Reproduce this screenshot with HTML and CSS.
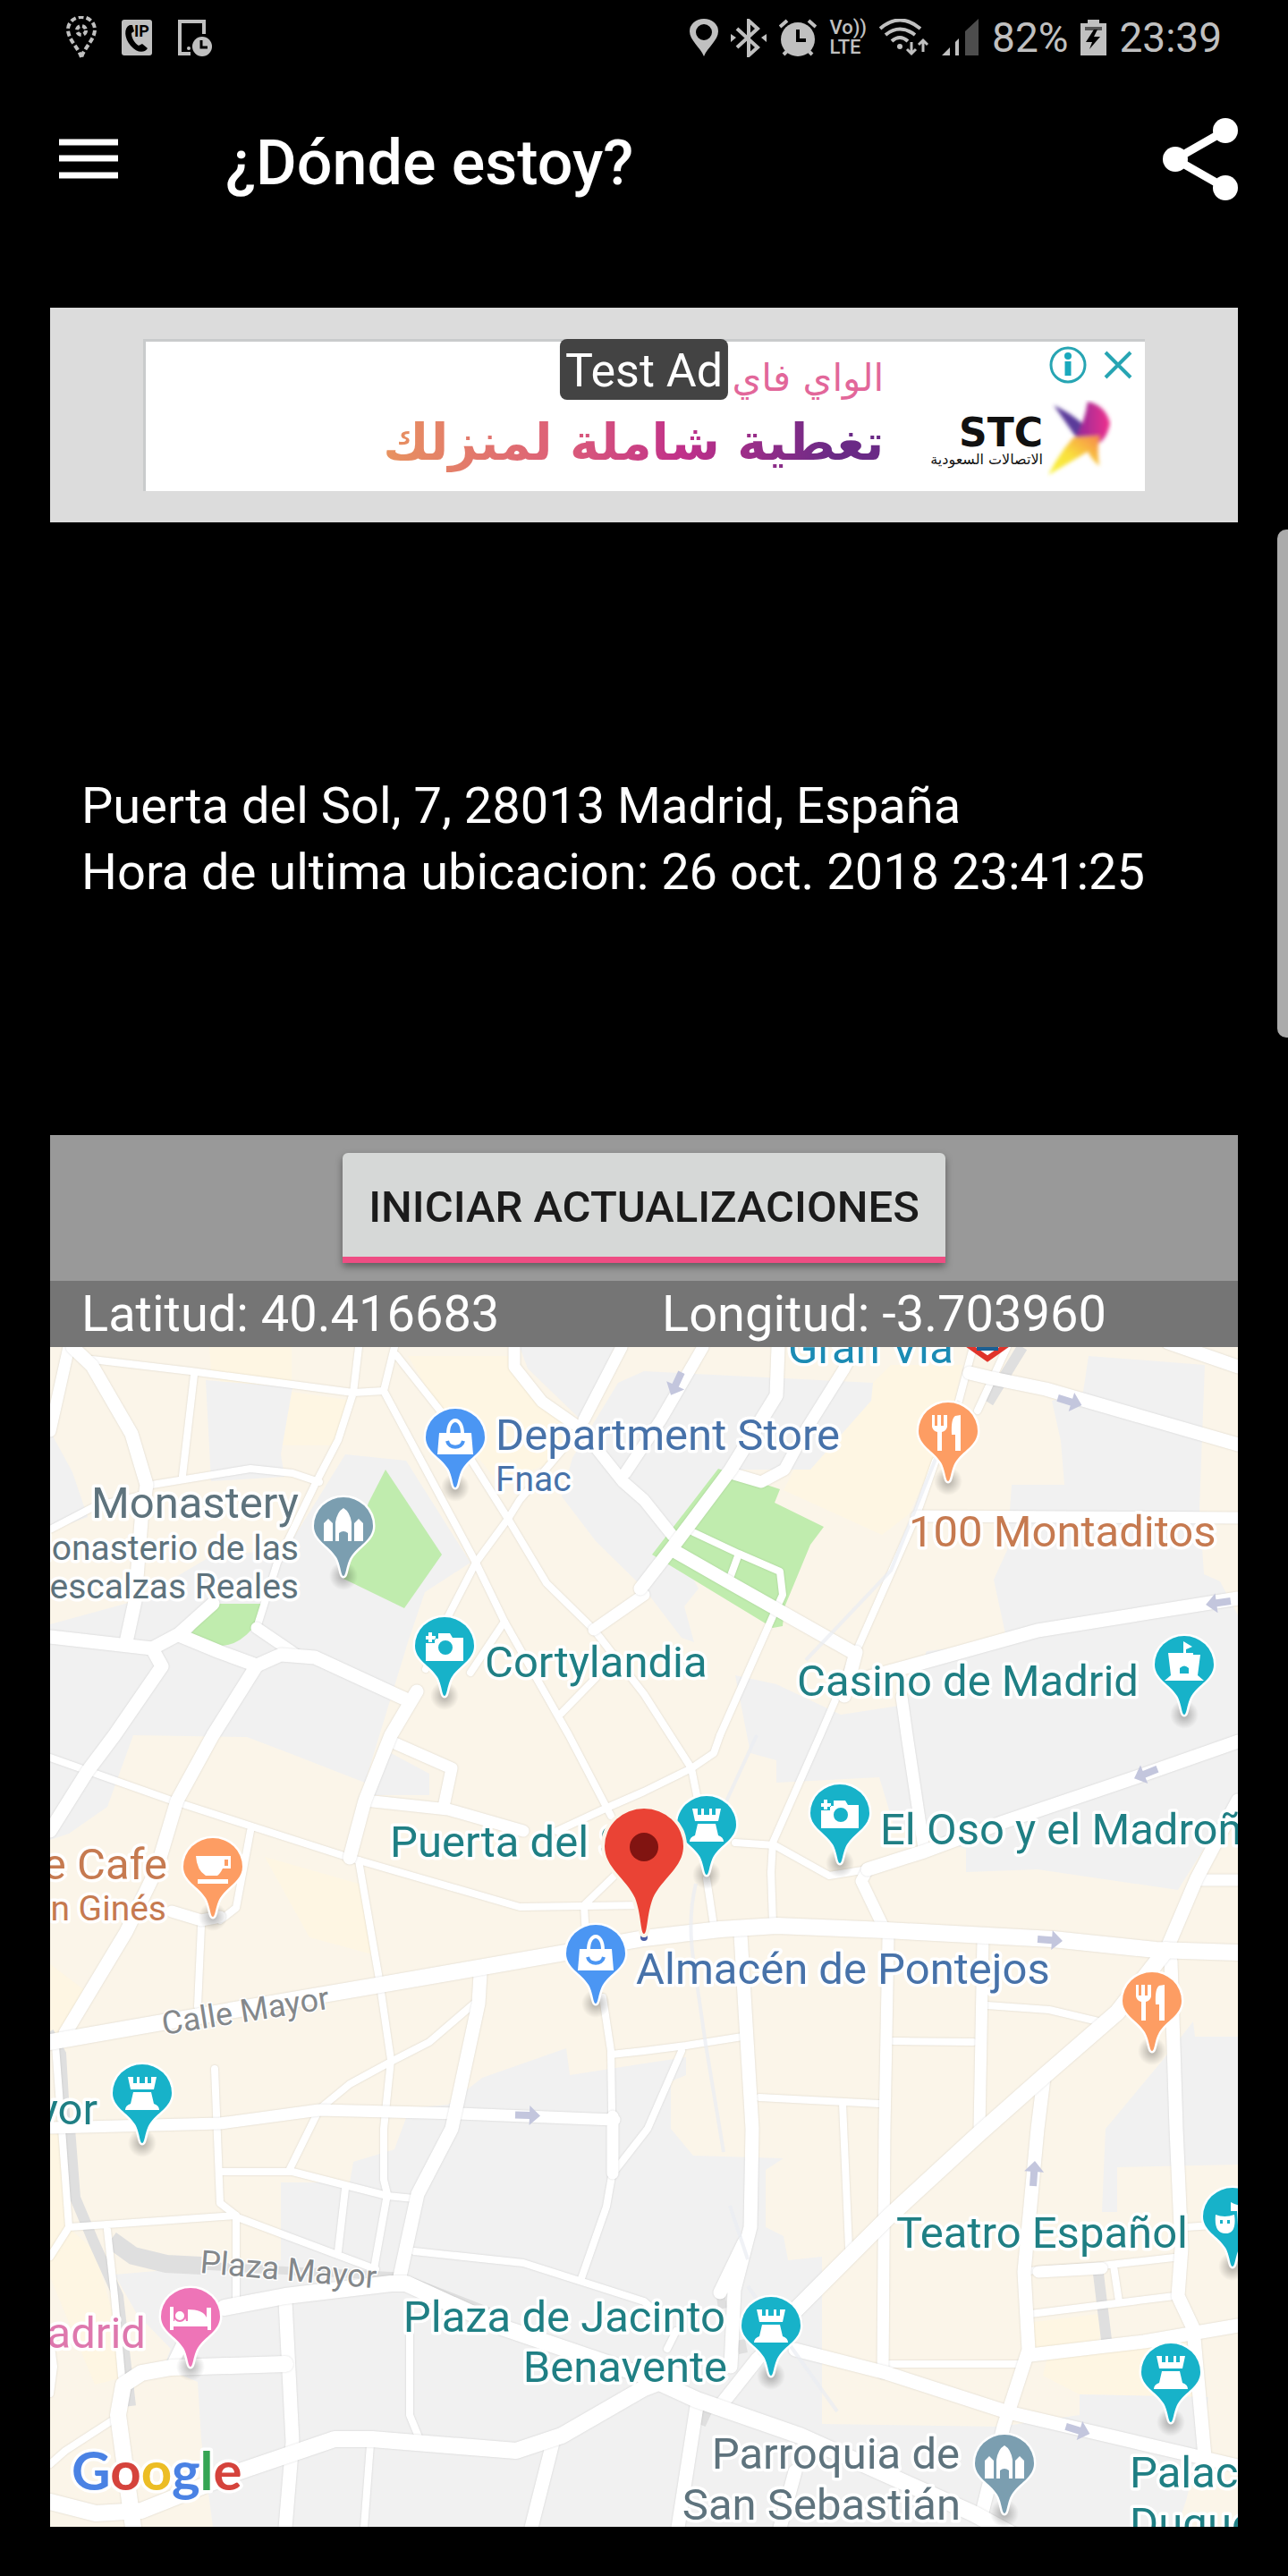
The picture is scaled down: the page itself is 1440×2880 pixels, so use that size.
FILE: index.html
```html
<!DOCTYPE html>
<html lang="es">
<head>
    <meta charset="UTF-8">
    <title>¿Dónde estoy?</title>
    <meta name="viewport" content="width=device-width, initial-scale=1.0">
    <link rel="stylesheet" href="styles.css">
</head>
<body>

<div class="statusbar">
    <div class="status-left">
        <svg width="34" height="48" viewBox="0 0 34 48" fill="none" stroke="#c0c0c0" stroke-width="4" stroke-dasharray="6 3">
            <path d="M17 46C14 36 2 26 2 15A15 14 0 0 1 32 15C32 26 20 36 17 46Z"/>
            <circle cx="17" cy="16" r="5" stroke-dasharray="5 3"/>
        </svg>
        <svg width="34" height="40" viewBox="0 0 34 40">
            <rect width="34" height="40" rx="3" fill="#c0c0c0"/>
            <path d="M9 6C2 9 3 21 10 29C17 37 25 38 29 32L23 27L19 29C14 26 11 20 11 15L14 13L12 6Z" fill="#000"/>
            <text x="14" y="19" class="ip">IP</text>
        </svg>
        <svg width="40" height="41" viewBox="0 0 40 41">
            <path d="M15 38H3V2H30V16" fill="none" stroke="#c0c0c0" stroke-width="4"/>
            <circle cx="13" cy="32" r="2" fill="#c0c0c0"/>
            <circle cx="28" cy="30" r="11" fill="#c0c0c0"/>
            <path d="M27 23V31H34" fill="none" stroke="#000" stroke-width="3"/>
        </svg>
    </div>
    <div class="status-right">
        <svg width="32" height="42" viewBox="0 0 32 42"><path fill="#c0c0c0" fill-rule="evenodd" d="M16 42C12 32 0 24 0 14A16 14 0 0 1 32 14C32 24 20 32 16 42ZM16 6A9 9 0 1 0 16 24A9 9 0 1 0 16 6Z"/></svg>
        <svg width="40" height="43" viewBox="0 0 40 43"><path d="M7 11L30 32L20 41V2L30 11L7 32" fill="none" stroke="#c0c0c0" stroke-width="4"/><path d="M0 17V26L6 21ZM40 17V26L34 21Z" fill="#c0c0c0"/></svg>
        <svg width="42" height="42" viewBox="0 0 42 42"><path d="M1 9L9 2M33 2L41 9M5 40L9 36M33 36L37 40" stroke="#c0c0c0" stroke-width="4"/><ellipse cx="21" cy="23" rx="19" ry="19" fill="#c0c0c0"/><path d="M21 12V24H30" fill="none" stroke="#000" stroke-width="4"/></svg>
        <div class="volte"><span>Vo))</span><span>LTE</span></div>
        <svg width="56" height="42" viewBox="0 0 56 42"><path d="M1 11Q23 -8 46 11M7 18Q23 5 40 18M14 25Q23 17 32 25" fill="none" stroke="#c0c0c0" stroke-width="4"/><circle cx="23" cy="31" r="3" fill="#c0c0c0"/><path d="M36 26V39M31 34L36 39L41 34M49 37V24M44 29L49 24L54 29" fill="none" stroke="#c0c0c0" stroke-width="3"/></svg>
        <svg width="42" height="42" viewBox="0 0 42 42"><path d="M0 41L9 32V41ZM15 26L19 22V41H15Z" fill="#c0c0c0"/><path d="M26 14L41 0V41H26Z" fill="#4d4d4d"/></svg>
        <span class="status-text">82%</span>
        <svg width="29" height="42" viewBox="0 0 29 42"><path d="M8 1H21V5H29V41H0V5H8Z" fill="#c0c0c0"/><path d="M5 9H24V13H5Z" fill="#555"/><path d="M15 12L6 26H13L10 34L22 20H15L19 12Z" fill="#000"/></svg>
        <span class="status-text">23:39</span>
    </div>
</div>

<header class="appbar">
    <button class="icon-btn" type="button" aria-label="Menú">
        <svg width="66" height="48" viewBox="0 0 66 48"><path d="M0 5H66M0 23H66M0 42H66" stroke="#fff" stroke-width="7"/></svg>
    </button>
    <h1>¿Dónde estoy?</h1>
    <button class="icon-btn" type="button" aria-label="Compartir">
        <svg width="84" height="92" viewBox="0 0 84 92"><path d="M70 14L14 46L70 78" fill="none" stroke="#fff" stroke-width="9"/><g fill="#fff"><circle cx="70" cy="14" r="14"/><circle cx="14" cy="46" r="14"/><circle cx="70" cy="78" r="14"/></g></svg>
    </button>
</header>

<main>
    <section class="ad">
        <div class="ad-box">
            <span class="test-ad">Test Ad</span>
            <div class="ad-text" lang="ar" dir="rtl">
                <span class="ad-line1">الواي فاي</span>
                <span class="ad-line2">تغطية شاملة لمنزلك</span>
            </div>
            <div class="ad-side">
                <div class="ad-choices">
                    <button class="icon-btn" type="button" aria-label="Información">
                        <svg width="42" height="42" viewBox="0 0 42 42"><circle cx="21" cy="21" r="19" fill="none" stroke="#27a5b3" stroke-width="3"/><circle cx="21" cy="11" r="4" fill="#1aa9bd"/><path d="M21 17V33" stroke="#1aa9bd" stroke-width="7"/></svg>
                    </button>
                    <button class="icon-btn" type="button" aria-label="Cerrar">
                        <svg width="32" height="32" viewBox="0 0 32 32"><path d="M2 2L30 30M30 2L2 30" stroke="#27a5b3" stroke-width="4"/></svg>
                    </button>
                </div>
                <div class="brand">
                    <div class="brand-name">
                        <b>STC</b>
                        <span lang="ar" dir="rtl">الاتصالات السعودية</span>
                    </div>
                    <svg width="74" height="88" viewBox="0 0 74 88">
                        <defs>
                            <linearGradient id="wing" x1="0" y1="0" x2="1" y2="0"><stop offset="0" stop-color="#8a2a9a"/><stop offset="1" stop-color="#f0308c"/></linearGradient>
                            <linearGradient id="tail" x1="0" y1="1" x2="1" y2="0"><stop offset="0" stop-color="#f8f43c"/><stop offset=".45" stop-color="#f9e03c"/><stop offset="1" stop-color="#f7864a"/></linearGradient>
                            <filter id="soft"><feGaussianBlur stdDeviation="2"/></filter>
                        </defs>
                        <g filter="url(#soft)">
                            <path d="M8 6Q26 14 42 28L36 46Q22 26 8 6Z" fill="#5a3a9a"/>
                            <path d="M46 2Q66 6 71 26Q68 44 56 50L30 46Q42 28 46 2Z" fill="url(#wing)"/>
                            <path d="M2 84Q14 60 30 42L60 40Q56 52 59 74Q50 66 46 58Q26 70 2 84Z" fill="url(#tail)"/>
                        </g>
                    </svg>
                </div>
            </div>
        </div>
    </section>

    <section class="address">
        <p>Puerta del Sol, 7, 28013 Madrid, España</p>
        <p>Hora de ultima ubicacion: 26 oct. 2018 23:41:25</p>
    </section>

    <section class="actions">
        <button class="start-btn" type="button">INICIAR ACTUALIZACIONES</button>
    </section>

    <section class="coords">
        <span>Latitud: 40.416683</span>
        <span>Longitud: -3.703960</span>
    </section>

    <svg class="map" viewBox="0 0 1328 1319" role="img" aria-label="Mapa de Madrid">
        <defs>
            <path id="pin" d="M0 0C-3 0 -3 -13 -8 -21C-16 -34 -33 -40 -33 -56A33 32 0 0 1 33 -56C33 -40 16 -34 8 -21C3 -13 3 0 0 0Z"/>
            <path id="rook" d="M-16 -74H-10V-67H-6V-74H-3V-67H3V-74H6V-67H10V-74H16L13 -60H-13ZM-10 -57H10L13 -44Q19 -42 19 -37H-19Q-19 -42 -13 -44Z"/>
            <g id="bag"><path d="M-18 -61H18L20 -37H-20Z"/><path d="M-8 -60C-8 -80 8 -80 8 -60" fill="none" stroke="#fff" stroke-width="4"/><path d="M-9 -52C-7 -43 7 -43 9 -52" fill="none" stroke="#4b96f3" stroke-width="4"/></g>
            <path id="church" d="M-22 -39V-59L-17 -64L-12 -59V-39ZM12 -39V-59L17 -64L22 -59V-39ZM-9 -39V-60Q-7 -72 0 -76Q7 -72 9 -60V-39H5V-48Q0 -52 -5 -48V-39Z"/>
            <path id="camera" fill-rule="evenodd" d="M-21 -59H-11V-64H-7V-70H6L9 -65H21V-39H-21ZM1 -62A8 8 0 1 0 1 -46A8 8 0 1 0 1 -62ZM-18 -71H-14V-67H-10V-63H-14V-60H-18V-63H-21V-67H-18Z"/>
            <path id="fork" d="M-18 -74H-15V-62H-12V-74H-8V-62H-5V-74H-1V-61Q-2 -56 -7 -55V-34H-12V-55Q-17 -56 -18 -61ZM14 -74V-34H8V-52H4Q3 -70 8 -73Z"/>
            <path id="castle" fill-rule="evenodd" d="M-1 -69V-82L9 -76L2 -73V-69H10V-67H18L15 -44L22 -38H-22L-15 -44L-18 -69ZM-5 -46H5V-52Q0 -57 -5 -52Z"/>
            <path id="cup" fill-rule="evenodd" d="M-19 -68H20V-54H11Q8 -48 5 -46H-8Q-18 -52 -19 -68ZM13 -64V-57H17V-64ZM-17 -42H17V-37H-17Z"/>
            <path id="bed" d="M-23 -67H-19V-51H-18V-55Q-18 -63 -12 -63Q-6 -63 -6 -55L-5 -51H-3V-64Q14 -64 18 -55V-66H23V-41H19V-45H-19V-41H-23Z"/>
            <path id="mask" fill-rule="evenodd" d="M-19 -58Q-9 -54 2 -58Q5 -37 -8 -37Q-21 -37 -19 -58ZM-2 -72Q8 -66 18 -70V-50Q14 -44 6 -46L5 -62H-2ZM-14 -52V-48H-11V-52ZM-6 -52V-48H-3V-52Z"/>
            <path id="arrow" d="M-14 -4H2V-11L14 0L2 11V4H-14Z"/>
            <radialGradient id="shade"><stop offset="0" stop-color="#000" stop-opacity=".3"/><stop offset="1" stop-color="#000" stop-opacity="0"/></radialGradient>
        </defs>

        <rect width="1328" height="1319" fill="#fbf5e9"/>

        <!-- blocks -->
        <g fill="#fef6e3">
            <path d="M178 0H270V50L339 60L322 110H258L180 27ZM400 10H520L550 61L593 91L560 130L500 150L436 71Z"/>
            <path d="M940 20H1020L1005 90L960 187L930 210L820 160L846 110L900 60ZM240 570L345 600L364 680L290 660ZM1100 1090L1180 1080L1170 1120L1100 1125ZM1115 1130L1270 1110L1290 1174L1151 1171L1110 1150Z"/>
            <path d="M0 690L40 720L17 767L0 775ZM0 880H20V984L50 1010L90 1150L50 1160L0 1040Z"/>
        </g>
        <g fill="#f1f1f1">
            <path d="M0 94L25 140L42 190L0 205Z"/>
            <path d="M174 37L271 45L258 120L262 145L180 150Z"/>
            <path d="M178 235L265 225L330 120L398 127L470 241L419 274L400 330L352 487L270 455L220 436L93 434L64 514L21 544L0 551V310L95 284Z"/>
            <path d="M381 454L424 477V501L360 501Z"/>
            <path d="M525 0H631L593 81L534 24Z"/>
            <path d="M635 40L664 27L920 40L918 60L850 137L761 137L698 221L725 270L709 290L720 330L706 325L664 270L610 217L572 167L584 124Z"/>
            <path d="M1161 10L1291 20L1285 180L1290 254L1308 262L1328 300V500L1261 607L1104 584L1024 587V561L943 534L927 481L812 487V462L783 454L766 367L812 377L884 411L956 400L980 340L1070 330L1055 260L1070 227L1075 154L1134 154L1130 105L1120 60L1155 50Z"/>
            <path d="M1244 797L1180 874L1176 967H1193V917L1328 914V771H1280L1278 754Z"/>
            <path d="M577 784L581 814L664 801L711 794V814L694 821V874L719 904L820 907L800 920V984L820 994L825 1021L863 1017V1204L1062 1207L1151 1194V1171L1295 1174L1285 1230L1270 1290L1260 1319H182L169 1221L165 1157L127 1141L135 1120L97 1081L72 1037L258 1021V934H335L339 911L385 897L402 851L445 847L483 817Z"/>
        </g>
        <g fill="#c0ecae">
            <path d="M375 137L438 232L396 292L328 259L356 174Z"/>
            <path d="M184 287H237L227 314Q210 334 191 334L157 321Z"/>
            <path d="M747 136L816 159L810 174L865 201L850 221L821 291L819 312L808 314L673 232Z"/>
        </g>

        <!-- pedestrian and tunnel stretches -->
        <g class="tunnel">
            <path d="M1087 0L1049 62M1172 1036L1181 1110" stroke-width="12"/>
            <path d="M22 874L28 951L49 1001L76 1061L90 1184" stroke-width="12"/>
            <path d="M68 998L93 1016L130 1025L169 1027" stroke-width="20"/>
            <path d="M0 765L14 790L19 874" stroke-width="8"/>
            <path d="M169 1027L271 1033L390 1039L508 1085" stroke-width="9"/>
            <path d="M749 1055L752 1075M772 1110L775 1125M735 1190L728 1205" stroke-width="10"/>
        </g>

        <!-- streets -->
        <g id="roads">
            <g class="road w8">
                <path d="M161 31L148 144M114 154L224 136L271 141L301 151M0 204L50 178L102 166"/>
                <path d="M47 14L157 27L339 51L373 49M345 0L339 51L322 104L296 154L254 241L231 314"/>
                <path d="M385 0L373 49L476 241L508 307L580 434L627 524"/>
                <path d="M387 9L436 71L512 192L555 264L608 316L664 388L717 471L723 501"/>
                <path d="M593 91L525 171L512 192L476 241L445 301L420 360M508 307L470 364M571 410L610 370"/>
                <path d="M749 434L742 454L717 471L664 497L625 514L567 541"/>
                <path d="M719 207L770 231L816 251L819 277L808 301L749 434M770 231L759 261"/>
                <path d="M1032 0L1016 60M1070 0L1037 71"/>
                <path d="M990 127L969 187L901 341L861 434L808 554L806 587L808 644"/>
                <path d="M914 584L871 591L810 557L766 554M734 594L742 647"/>
                <path d="M1047 736L1117 741L1172 754M943 776L1032 777M627 791L664 787L711 781L774 771M706 787L668 874L629 924"/>
                <path d="M793 839L927 846M886 846L893 1007"/>
                <path d="M0 459L136 507L229 537L335 571L525 626L664 624M224 541L208 627L190 641M169 647L165 737"/>
                <path d="M345 574L368 707L381 797L373 874V931L377 947L362 1031"/>
                <path d="M474 734L424 777L381 799L335 824L301 852L267 921M184 807L190 957L208 971V1067"/>
                <path d="M631 591L597 624L599 660M618 727L627 787L629 921L622 961L593 1044"/>
                <path d="M6 781L13 874L21 984L208 971M0 1017L21 984M64 987L72 1061L80 1151"/>
                <path d="M190 922L271 922L377 949L407 952M212 974L364 1031M330 941L322 1011"/>
                <path d="M407 1011L529 1024L664 1067L690 1090M68 1201L17 1234L0 1249M402 1090V1194L413 1221M358 1227L351 1320"/>
                <path d="M0 1110L4 1140L0 1170M690 1120L700 1100"/>
                <path d="M939 1137H1083M1092 1033L1176 1027L1265 1017M1096 1081L1257 1061M1189 1027L1195 1067M1270 984L1300 982"/>
            </g>
            <g class="road w12">
                <path d="M21 0L0 94M519 0V22L550 61L593 91L640 150L664 171L696 211M639 0L597 81M730 0L683 81L643 141"/>
                <path d="M901 0L888 24L846 91L821 137L795 151L761 141M664 277L608 316M231 314L275 344M969 189L1328 191"/>
                <path d="M952 391L958 434L977 561M1287 596H1328M914 584L907 597L931 647"/>
                <path d="M937 661L933 874L931 1147M1043 661L1039 874"/>
                <path d="M381 441L449 471L440 514M352 507L445 517L529 541M136 631L169 641L190 637"/>
                <path d="M0 873L190 868L301 853L457 857L631 864M629 860V924M135 1141L150 1110M1105 1034L1176 1030"/>
            </g>
            <g class="road w15">
                <path d="M25 0L47 21L91 97L108 154L102 194L95 284L85 330"/>
                <path d="M0 324L114 337L144 321L182 287M144 322L190 341L231 356L258 344L296 347L398 394"/>
                <path d="M114 337L125 357L72 434L42 474L0 541M231 356L182 434L142 507L119 584L85 654L17 767"/>
                <path d="M410 385L381 434L352 507L335 571"/>
                <path d="M814 0L812 54L761 137L698 221L660 270M696 227L766 267L897 341"/>
                <path d="M901 341L888 390M1028 29L1049 34L1113 47L1328 109M1328 281L1104 317L960 357L897 374M1250 -5L1328 22"/>
                <path d="M1328 441L1214 481L1066 531L977 564L914 584M1328 507L1282 594L1248 674"/>
                <path d="M772 657L785 874L783 984L765 1054L761 1140M776 1001L749 1057M833 1090L791 1131L749 1184M723 1184L702 1320M833 1257L816 1320"/>
                <path d="M1253 687L1259 874L1265 1007L1261 1061L1278 1097L1291 1241"/>
                <path d="M1111 817L1104 874L1089 1034L1094 1121L1066 1207L1041 1307"/>
                <path d="M481 701L479 734L449 874L411 947L390 1044M263 1067L271 1224L263 1320M563 1221L538 1320"/>
                <path d="M833 1121L935 1147L1071 1191L1328 1251M1096 1127L1180 1117L1223 1112L1328 1094"/>
            </g>
            <g class="road w18">
                <path d="M0 777L114 757L364 714L576 677L664 661L749 651L812 647L935 652L1121 662L1236 674L1328 677"/>
                <path d="M1248 674L1193 744L1109 817L1039 879L939 971L830 1080L800 1120"/>
                <path d="M195 1074L263 1061L381 1047L398 1047L508 1097L664 1150L723 1177L838 1217L1032 1304L1080 1330"/>
                <path d="M263 1137L135 1141L102 1147L82 1160L76 1194L93 1320"/>
                <path d="M0 1291L51 1304L102 1301L212 1257L318 1221H360L521 1234L572 1217L664 1164L700 1150"/>
            </g>
        </g>

        <!-- metro lines under the streets -->
        <path class="metro-line" d="M1016 60L940 250L845 350M790 434L755 510M722 600Q712 640 720 690L733 780L753 900M760 960L780 1020M780 1050L880 1190"/>

        <g fill="#c3c6dd">
            <use href="#arrow" transform="translate(700 41) rotate(115)"/>
            <use href="#arrow" transform="translate(1140 61) rotate(17)"/>
            <use href="#arrow" transform="translate(1306 286) rotate(172)"/>
            <use href="#arrow" transform="translate(1225 477) rotate(158)"/>
            <use href="#arrow" transform="translate(1118 663) rotate(4)"/>
            <use href="#arrow" transform="translate(534 859) rotate(2)"/>
            <use href="#arrow" transform="translate(1100 924) rotate(-86)"/>
            <use href="#arrow" transform="translate(1149 1211) rotate(17)"/>
        </g>

        <!-- metro sign, cut by the top edge -->
        <path d="M1018 -8L1048 13L1078 -8" fill="#fff" stroke="#e0342b" stroke-width="6"/>
        <path d="M1036 0H1060V4H1036Z" fill="#1c5f92"/>

        <!-- labels -->
        <g class="label">
            <text class="metro" x="825" y="18">Gran Vía</text>
            <text class="blue" x="498" y="115">Department Store</text>
            <text class="blue small" x="498" y="161">Fnac</text>
            <text class="slate end" x="278" y="191">Monastery</text>
            <text class="slate small end" x="278" y="238">Monasterio de las</text>
            <text class="slate small end" x="278" y="281">Descalzas Reales</text>
            <text class="teal" x="486" y="369">Cortylandia</text>
            <text class="orange" x="960" y="223">100 Montaditos</text>
            <text class="teal end" x="1217" y="390">Casino de Madrid</text>
            <text class="orange end" x="131" y="595">e Cafe</text>
            <text class="orange small end" x="130" y="641">an Ginés</text>
            <text class="teal" x="380" y="570">Puerta del S</text>
            <text class="teal" x="928" y="556">El Oso y el Madroñ</text>
            <text class="blue" x="655" y="712">Almacén de Pontejos</text>
            <text class="teal end" x="53" y="869">yor</text>
            <text class="pink end" x="107" y="1119">adrid</text>
            <text class="teal end" x="755" y="1101">Plaza de Jacinto</text>
            <text class="teal end" x="757" y="1157">Benavente</text>
            <text class="teal end" x="1272" y="1007">Teatro Español</text>
            <text class="slate end" x="1017" y="1254">Parroquia de</text>
            <text class="slate end" x="1018" y="1311">San Sebastián</text>
            <text class="teal" x="1207" y="1275">Palac</text>
            <text class="teal" x="1207" y="1332">Duque</text>
            <text class="street" transform="translate(127 769) rotate(-9)">Calle Mayor</text>
            <text class="street" transform="translate(167 1035) rotate(5)">Plaza Mayor</text>
            <text class="google" x="24" y="1278"><tspan fill="#4a82e4">G</tspan><tspan fill="#d5433c">o</tspan><tspan fill="#ecbd25">o</tspan><tspan fill="#4a82e4">g</tspan><tspan fill="#35a554">l</tspan><tspan fill="#d5433c">e</tspan></text>
        </g>

        <!-- place pins -->
        <g class="pins">
            <g transform="translate(453 157)"><circle r="16" fill="url(#shade)"/><use href="#pin" class="pin p-blue"/><use href="#bag"/></g>
            <g transform="translate(328 256)"><circle r="16" fill="url(#shade)"/><use href="#pin" class="pin p-slate"/><use href="#church"/></g>
            <g transform="translate(441 390)"><circle r="16" fill="url(#shade)"/><use href="#pin" class="pin p-teal"/><use href="#camera"/></g>
            <g transform="translate(1004 150)"><circle r="16" fill="url(#shade)"/><use href="#pin" class="pin p-orange"/><use href="#fork"/></g>
            <g transform="translate(1268 411)"><circle r="16" fill="url(#shade)"/><use href="#pin" class="pin p-teal"/><use href="#castle"/></g>
            <g transform="translate(182 637)"><circle r="16" fill="url(#shade)"/><use href="#pin" class="pin p-orange"/><use href="#cup"/></g>
            <g transform="translate(734 590)"><circle r="16" fill="url(#shade)"/><use href="#pin" class="pin p-teal"/><use href="#rook"/></g>
            <g transform="translate(883 577)"><circle r="16" fill="url(#shade)"/><use href="#pin" class="pin p-teal"/><use href="#camera"/></g>
            <g transform="translate(610 734)"><circle r="16" fill="url(#shade)"/><use href="#pin" class="pin p-blue"/><use href="#bag"/></g>
            <g transform="translate(1232 787)"><circle r="16" fill="url(#shade)"/><use href="#pin" class="pin p-orange"/><use href="#fork"/></g>
            <g transform="translate(103 890)"><circle r="16" fill="url(#shade)"/><use href="#pin" class="pin p-teal"/><use href="#rook"/></g>
            <g transform="translate(1322 1028)"><circle r="16" fill="url(#shade)"/><use href="#pin" class="pin p-teal"/><use href="#mask"/></g>
            <g transform="translate(157 1140)"><circle r="16" fill="url(#shade)"/><use href="#pin" class="pin p-pink"/><use href="#bed"/><circle cx="-12" cy="-57" r="6" stroke="#ee74b7" stroke-width="2"/></g>
            <g transform="translate(806 1150)"><circle r="16" fill="url(#shade)"/><use href="#pin" class="pin p-teal"/><use href="#rook"/></g>
            <g transform="translate(1253 1202)"><circle r="16" fill="url(#shade)"/><use href="#pin" class="pin p-teal"/><use href="#rook"/></g>
            <g transform="translate(1067 1304)"><circle r="16" fill="url(#shade)"/><use href="#pin" class="pin p-slate"/><use href="#church"/></g>
        </g>

        <!-- current position -->
        <g transform="translate(664 656)">
            <circle cy="4" r="4" fill="#4a5fa5"/>
            <path class="here" d="M0 0C-4 0 -3 -22 -10 -40C-20 -62 -44 -74 -44 -98A44 42 0 0 1 44 -98C44 -74 20 -62 10 -40C3 -22 4 0 0 0Z"/>
            <circle cy="-97" r="16" fill="#811411"/>
        </g>
    </svg>
</main>

<div class="edge-handle"></div>

</body>
</html>
```

FILE: styles.css
```css
* {
    box-sizing: border-box;
}
body {
    margin: 0;
    background: #000;
    color: #fff;
    font-family: Roboto, sans-serif;
    position: relative;
}
svg {
    display: block;
}
button {
    font-family: inherit;
    border: none;
    cursor: pointer;
}
.icon-btn {
    background: none;
    padding: 0;
}

/* Status bar */
.statusbar {
    display: flex;
    justify-content: space-between;
    align-items: center;
    height: 84px;
    padding: 0 74px;
    color: #c0c0c0;
}
.status-left {
    display: flex;
    align-items: center;
    gap: 28px;
}
.status-right {
    display: flex;
    align-items: center;
    gap: 14px;
}
.status-text {
    font-size: 46px;
    line-height: 48px;
}
.ip {
    font-size: 18px;
    font-weight: 700;
}
.volte {
    display: flex;
    flex-direction: column;
    font-size: 22px;
    line-height: 22px;
    font-weight: 500;
}

/* App bar */
.appbar {
    display: flex;
    align-items: center;
    height: 188px;
    padding: 0 56px 0 66px;
}
.appbar h1 {
    flex: 1;
    margin: 0;
    padding: 8px 0 0 120px;
    font-size: 70px;
    line-height: 80px;
    font-weight: 500;
}

main {
    padding: 72px 56px 55px;
}

/* Ad banner */
.ad {
    background: #dcdcdc;
    padding: 35px 104px;
}
.ad-box {
    position: relative;
    display: flex;
    justify-content: flex-end;
    gap: 52px;
    height: 170px;
    background: #fff;
    box-shadow: inset 3px 3px 0 #c9cbcc;
    padding: 4px 14px 0 0;
}
.test-ad {
    position: absolute;
    top: 0;
    left: 50%;
    transform: translateX(-50%);
    background: #434343;
    border-radius: 8px;
    padding: 3px 6px 0;
    font-size: 52px;
    line-height: 65px;
    white-space: nowrap;
}
.ad-text {
    display: flex;
    flex-direction: column;
    font-family: "DejaVu Sans", sans-serif;
    white-space: nowrap;
}
.ad-line1 {
    padding-top: 8px;
    font-size: 42px;
    line-height: 64px;
    color: #e2679a;
}
.ad-line2 {
    font-size: 56px;
    line-height: 80px;
    font-weight: 700;
    background: linear-gradient(90deg, #e8935f, #dd5f78 35%, #c0308a 60%, #6a2a86 90%);
    -webkit-background-clip: text;
    background-clip: text;
    color: transparent;
}
.ad-side {
    display: flex;
    flex-direction: column;
    align-items: flex-end;
    padding-top: 4px;
    gap: 18px;
}
.ad-choices {
    display: flex;
    align-items: center;
    gap: 19px;
}
.brand {
    display: flex;
    align-items: center;
    gap: 4px;
    padding-right: 22px;
}
.brand-name {
    display: flex;
    flex-direction: column;
    align-items: flex-end;
    padding-top: 8px;
    color: #111;
}
.brand-name b {
    font-family: "DejaVu Sans", sans-serif;
    font-size: 44px;
    line-height: 38px;
}
.brand-name span {
    font-family: "DejaVu Sans", sans-serif;
    font-size: 16px;
    line-height: 22px;
}

/* Address */
.address {
    padding: 280px 35px 257px;
}
.address p {
    margin: 0;
    font-size: 56px;
    line-height: 74px;
}

/* Start button */
.actions {
    display: flex;
    justify-content: center;
    background: #999;
    padding: 20px 0;
}
.start-btn {
    background: #d6d8d7;
    color: #1b1b1b;
    border-bottom: 7px solid #ee4d83;
    border-radius: 6px 6px 0 0;
    padding: 5px 29px 0;
    font-size: 49px;
    line-height: 111px;
    font-weight: 500;
    box-shadow: 0 4px 8px rgba(0,0,0,0.4);
}

/* Coordinates */
.coords {
    display: grid;
    grid-template-columns: 1fr 1fr;
    background: #757575;
    padding: 0 35px;
    column-gap: 40px;
    font-size: 56px;
    line-height: 74px;
}

/* Map */
.map {
    width: 100%;
    height: auto;
    overflow: hidden;
}
.road {
    fill: none;
    stroke: #fff;
    stroke-linejoin: round;
    stroke-linecap: round;
    filter: drop-shadow(0 0 1px rgba(0,0,0,0.14));
}
.w8 {
    stroke-width: 8px;
}
.w12 {
    stroke-width: 13px;
}
.w15 {
    stroke-width: 15px;
}
.w18 {
    stroke-width: 18px;
}
.tunnel {
    fill: none;
    stroke: #dfdfdf;
}
.metro-line {
    fill: none;
    stroke: #e9ecf2;
    stroke-width: 4px;
    opacity: 0.7;
}
.label {
    font-size: 49px;
    stroke: #fff;
    stroke-width: 7px;
    stroke-linejoin: round;
    paint-order: stroke;
}
.small {
    font-size: 39px;
}
.street {
    font-size: 36px;
    fill: #84888b;
    stroke-width: 3px;
}
.end {
    text-anchor: end;
}
.metro {
    fill: #1b8bb4;
}
.blue {
    fill: #4772a9;
}
.teal {
    fill: #1f7f84;
}
.slate {
    fill: #5e737d;
}
.orange {
    fill: #c67a50;
}
.pink {
    fill: #de78ae;
}
.google {
    font-family: Lato, sans-serif;
    font-size: 60px;
    font-weight: 700;
}
.pins {
    fill: #fff;
}
.pin {
    stroke: #fff;
    stroke-width: 5px;
    paint-order: stroke;
}
.p-blue {
    fill: #4b96f3;
}
.p-slate {
    fill: #7b9eb0;
}
.p-teal {
    fill: #17b2c9;
}
.p-orange {
    fill: #fd9d63;
}
.p-pink {
    fill: #ee74b7;
}
.here {
    fill: #ea4335;
    stroke: #fbf5e9;
    stroke-width: 8px;
    paint-order: stroke;
}

/* Edge panel handle of the phone */
.edge-handle {
    position: absolute;
    top: 592px;
    right: 0;
    width: 12px;
    height: 568px;
    background: #ababab;
    border-radius: 10px 0 0 10px;
}
```
